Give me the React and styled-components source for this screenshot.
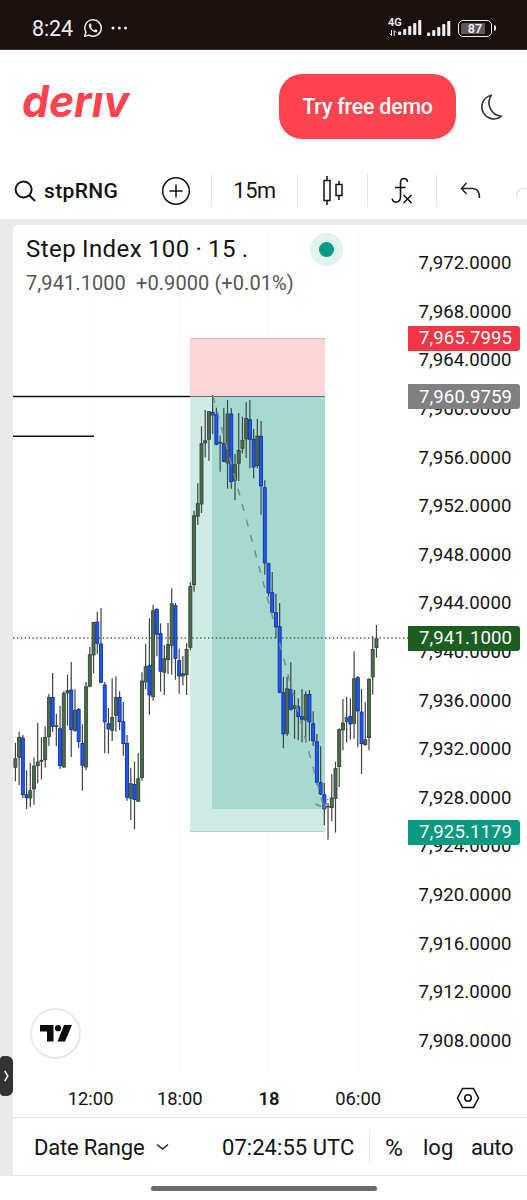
import React from "react";
import styled, { createGlobalStyle } from "styled-components";

const GlobalStyle = createGlobalStyle`
  * {
    box-sizing: border-box;
  }
  body {
    margin: 0;
    background: #fff;
    font-family: Roboto, "Liberation Sans", sans-serif;
    color: #131313;
  }
`;

const Screen = styled.div`
  width: 527px;
  height: 1200px;
  display: flex;
  flex-direction: column;
  overflow: hidden;
  background: #fff;
`;

const StatusBar = styled.div`
  height: 50px;
  flex: none;
  display: flex;
  align-items: center;
  justify-content: space-between;
  padding: 7px 31px 0 32px;
  background: #1a100e;
  border-bottom: 1px solid #3b3331;
  color: #f1eeee;
  .left,
  .right {
    display: flex;
    align-items: center;
  }
  .time {
    width: 51px;
    font-size: 21.5px;
    letter-spacing: -0.1px;
  }
`;

const Header = styled.header`
  height: 112px;
  flex: none;
  display: flex;
  align-items: center;
  padding: 0 22px 0 23px;
  .logo {
    flex: 1;
    display: block;
    overflow: visible;
  }
  .moon {
    position: relative;
    top: 1px;
    left: -1px;
  }
`;

const DemoButton = styled.button`
  width: 177px;
  height: 65px;
  margin-right: 22px;
  border: 0;
  border-radius: 23px;
  background: #ff444f;
  color: #fff;
  font-family: inherit;
  font-size: 21.3px;
  letter-spacing: -0.17px;
  font-weight: 500;
  padding: 1px 0 0;
  white-space: nowrap;
`;

const Toolbar = styled.div`
  height: 57px;
  flex: none;
  display: flex;
  align-items: center;
  overflow: hidden;
  svg {
    flex: none;
  }
`;

const Tool = styled.div`
  width: ${(p) => p.$width}px;
  height: 33px;
  flex: none;
  display: flex;
  align-items: center;
  justify-content: ${(p) => (p.$start ? "flex-start" : "center")};
  padding-left: ${(p) => (p.$start ? 14 : 0)}px;
  border-right: ${(p) => (p.$line ? "1px solid #e4e4e4" : "0")};
  font-size: 21.8px;
  letter-spacing: -0.4px;
  b {
    margin-left: 8px;
    font-size: 21px;
    font-weight: 500;
    letter-spacing: 0.35px;
  }
`;

const Body = styled.div`
  height: 957px;
  flex: none;
  display: flex;
  padding-top: 6px;
  background: #e9e9e9;
  border-bottom: 1px solid #e6e6e6;
`;

const Rail = styled.div`
  width: 13px;
  flex: none;
  padding-top: 831px;
`;

const RailHandle = styled.div`
  width: 13px;
  height: 40px;
  display: flex;
  align-items: center;
  justify-content: center;
  border-radius: 4px 6px 6px 4px;
  background: #333;
`;

const Panel = styled.div`
  flex: 1;
  display: flex;
  flex-direction: column;
  background: #fff;
  border-top-left-radius: 5px;
`;

const ChartArea = styled.div`
  height: 847px;
  display: flex;
  position: relative;
`;

const Legend = styled.div`
  position: absolute;
  left: 13px;
  top: 8px;
  white-space: nowrap;
  .title {
    display: flex;
    align-items: center;
    height: 32px;
    font-size: 24px;
    letter-spacing: 0.45px;
    word-spacing: -0.6px;
  }
  .values {
    margin-top: 6px;
    font-size: 20px;
    line-height: 24px;
    letter-spacing: 0.08px;
    color: #555;
    white-space: pre;
  }
`;

const LiveDot = styled.span`
  position: absolute;
  left: 284px;
  top: 0;
  width: 33px;
  height: 33px;
  border-radius: 50%;
  border: 9px solid #e0f1ee;
  background: #089981;
`;

const TvBadge = styled.div`
  position: absolute;
  left: 17px;
  top: 783px;
  width: 51px;
  height: 51px;
  display: flex;
  align-items: center;
  justify-content: center;
  border: 2px solid #e9e9e9;
  border-radius: 50%;
  background: #fff;
`;

const PriceScale = styled.div`
  flex: 1;
  padding-top: 13.5px;
  position: relative;
`;

const Price = styled.div`
  height: 48.6px;
  padding: 1px 0 0 10.5px;
  display: flex;
  align-items: center;
  font-size: 18.6px;
  letter-spacing: 0.08px;
`;

const PriceTag = styled.div`
  position: absolute;
  left: 0;
  top: ${(p) => p.$top}px;
  width: 112px;
  height: 25px;
  padding: 0 0 0 11px;
  display: flex;
  align-items: center;
  border-radius: 0 3px 3px 0;
  background: ${(p) => p.$color};
  color: #fff;
  font-size: 18.6px;
  letter-spacing: 0.1px;
`;

const TimeScale = styled.div`
  height: 46px;
  display: flex;
  align-items: center;
  padding: 8px 0 0 33px;
  border-bottom: 1px solid #e6e6e6;
  font-size: 18.4px;
  span {
    width: 89.2px;
    text-align: center;
  }
  .bold {
    font-weight: 600;
  }
  svg {
    margin: -2px 0 0 53px;
  }
`;

const BottomBar = styled.div`
  height: 57px;
  display: flex;
  align-items: center;
  padding: 1px 0 0 21px;
  font-size: 22px;
  white-space: nowrap;
  .range {
    width: 188px;
    display: flex;
    align-items: center;
    letter-spacing: -0.2px;
    svg {
      margin-left: 12px;
    }
  }
  .clock {
    width: 148px;
    height: 33px;
    line-height: 34px;
    letter-spacing: 0.05px;
    border-right: 1px solid #e4e4e4;
  }
  .percent {
    width: 53px;
    padding-left: 15px;
    font-size: 24.5px;
  }
  .log {
    width: 48px;
  }
  .auto {
    letter-spacing: -0.4px;
  }
`;

const HomeBar = styled.div`
  width: 226px;
  height: 5px;
  margin: 10px 0 0 151px;
  border-radius: 3px;
  background: #6b6b6b;
`;

// every group: distance of its origin from the chart top, then
// [high, body top, body bottom, low, falling] in thirds of a pixel
const GROUPS = [
  {
    base: 355,
    bars: [
      [488, 535, 563, 604], [455, 471, 533, 615], [465, 473, 645, 654, 1], [571, 643, 654, 687, 1],
      [549, 631, 655, 681], [532, 557, 628, 674], [429, 545, 558, 610], [472, 540, 545, 598],
      [439, 471, 540, 563], [341, 351, 471, 498], [279, 351, 440, 455, 1], [401, 436, 440, 499],
      [378, 445, 558, 567, 1], [334, 339, 562, 564], [284, 331, 340, 437], [246, 329, 450, 531, 1],
      [328, 390, 452, 456], [384, 387, 486, 504, 1], [433, 489, 557, 632, 1], [306, 319, 562, 571],
      [201, 223, 320, 322], [126, 126, 226, 279], [95, 125, 191, 223, 1], [84, 191, 308, 309, 1],
      [306, 314, 427, 520, 1], [384, 430, 448, 521, 1], [295, 411, 452, 483], [289, 351, 407, 455],
      [334, 351, 426, 450, 1], [366, 424, 492, 527, 1], [465, 489, 653, 662, 1], [564, 610, 656, 720],
      [545, 612, 660, 748, 1], [519, 595, 665, 665],
    ],
  },
  {
    base: 315,
    bars: [
      [397, 422, 714, 722], [312, 379, 427, 447], [235, 376, 466, 524, 1], [194, 211, 471, 482],
      [205, 207, 284, 349, 1], [250, 280, 395, 455, 1], [315, 355, 398, 465], [249, 313, 360, 402],
      [145, 190, 317, 404], [189, 196, 356, 419, 1], [326, 361, 409, 461, 1], [348, 400, 409, 436],
      [310, 327, 405, 465], [127, 138, 323, 331],
    ],
  },
  {
    base: 155,
    bars: [
      [392, 406, 615, 635], [310, 370, 410, 435], [139, 190, 373, 399], [90, 181, 190, 232],
      [94, 94, 179, 242], [45, 96, 106, 162, 1], [83, 103, 194, 196, 1], [167, 186, 190, 275],
      [84, 190, 245, 247, 1], [60, 101, 250, 326], [84, 101, 306, 326, 1], [222, 253, 302, 361],
      [99, 210, 251, 303], [110, 180, 206, 220], [67, 114, 178, 234], [60, 118, 179, 265, 1],
      [147, 178, 262, 295, 1], [117, 167, 258, 265], [123, 168, 319, 404, 1], [301, 322, 550, 584, 1],
      [548, 550, 640, 650, 1],
    ],
  },
  {
    base: 335,
    bars: [
      [36, 97, 158, 160, 1], [101, 157, 202, 235, 1], [129, 199, 398, 400, 1], [350, 397, 523, 565, 1],
      [350, 385, 521, 528], [307, 388, 449, 452, 1], [390, 436, 446, 536], [415, 439, 471, 541, 1],
      [388, 469, 479, 547, 1], [394, 403, 481, 545], [390, 402, 487, 543, 1], [454, 490, 544, 558, 1],
      [522, 544, 668, 674, 1], [559, 667, 703, 705, 1], [669, 703, 748, 796, 1], [729, 738, 742, 839],
      [642, 713, 744, 784], [605, 624, 716, 818], [505, 508, 621, 681], [417, 488, 511, 571],
      [410, 472, 486, 547], [415, 468, 493, 539, 1], [274, 355, 491, 536], [348, 352, 454, 562, 1],
      [387, 455, 552, 642, 1], [427, 538, 555, 557], [355, 357, 534, 571], [228, 267, 352, 404],
      [195, 235, 264, 293],
    ],
  },
];

const candles = GROUPS.flatMap(({ base, bars }) =>
  bars.map(([high, top, bottom, low, falling]) => ({
    high: base + high / 3,
    top: base + top / 3,
    bottom: base + bottom / 3,
    low: base + low / 3,
    falling,
  }))
);

const prices = Array.from({ length: 17 }, (_, i) => `7,${972 - i * 4}.0000`);

const tags = [
  { text: "7,965.7995", top: 101, color: "#f23645" },
  { text: "7,960.9759", top: 159.5, color: "#808080" },
  { text: "7,941.1000", top: 401, color: "#1b5e20" },
  { text: "7,925.1179", top: 595, color: "#089981" },
];

function Candle({ index, high, top, bottom, low, falling }) {
  const x = 2.4 + index * 3.722;
  return (
    <g>
      <line x1={x} x2={x} y1={high} y2={low} stroke="#3f4440" strokeWidth="1.2" />
      <rect
        x={x - 1.5}
        y={top + 0.4}
        width="3"
        height={Math.max(bottom - top - 0.8, 0.6)}
        fill={falling ? "#2157f3" : "#4c6b4d"}
        stroke={falling ? "#0c2fa8" : "#35473a"}
        strokeWidth="0.9"
      />
    </g>
  );
}

function Chart() {
  return (
    <svg width="395" height="847" viewBox="0 0 395 847">
      {[77.5, 166.5, 256, 345.5].map((x) => (
        <line key={x} x1={x} x2={x} y1="0" y2="847" stroke="#f9f9f9" />
      ))}
      <rect x="177" y="113" width="135" height="58.5" fill="#fbd5d8" />
      <line x1="177" x2="312" y1="113.5" y2="113.5" stroke="#f3b3b8" />
      <rect x="177" y="171.5" width="135" height="435.5" fill="#cfebe5" />
      <rect x="199" y="171.5" width="113" height="412.5" fill="#a6dad1" />
      <line x1="177" x2="312" y1="606.5" y2="606.5" stroke="#a8d9d0" />
      <line x1="0" x2="177" y1="171.5" y2="171.5" stroke="#111" strokeWidth="1.4" />
      <line x1="177" x2="312" y1="171.5" y2="171.5" stroke="#66706e" strokeWidth="1.2" />
      <line x1="0" x2="81" y1="211.3" y2="211.3" stroke="#111" strokeWidth="1.6" />
      <line x1="0" x2="395" y1="413" y2="413" stroke="#39703c" strokeWidth="1.3" strokeDasharray="1.4 2.5" />
      {candles.map((candle, i) => (
        <Candle key={i} index={i} {...candle} />
      ))}
      <g fill="none" stroke="#7f8b89" strokeWidth="1.6" strokeDasharray="7 9">
        <path d="M200 171L311 583" />
        <path d="M302.500 579L311 583L315 574" strokeDasharray="6 3" />
      </g>
    </svg>
  );
}

function Signal() {
  return (
    <svg width="24" height="17" viewBox="0 0 24 17" fill="#f1eeee">
      <rect x="0" y="12.500" width="3.2" height="3.500" rx="1" />
      <rect x="5.2" y="10" width="3.1" height="6" rx="1" />
      <rect x="10.2" y="7" width="3.1" height="9" rx="1" />
      <rect x="15.200" y="4" width="3.1" height="12" rx="1" />
      <rect x="20.200" y="1" width="3.1" height="15" rx="1" />
    </svg>
  );
}

const Network = styled.div`
  width: 36px;
  height: 18px;
  display: flex;
  position: relative;
  margin-right: 2px;
  padding-left: 9px;
  .label {
    position: absolute;
    left: -1px;
    top: -1px;
    font-size: 11px;
    line-height: 10px;
    font-weight: 600;
  }
  .arrows {
    position: absolute;
    left: 0;
    top: 11px;
  }
`;

const Battery = styled.div`
  width: 34px;
  height: 17px;
  margin: 0 4px 0 7px;
  border: 1.6px solid #f1eeee;
  border-radius: 5px;
  display: flex;
  align-items: center;
  justify-content: center;
  position: relative;
  font-size: 12.5px;
  font-weight: 600;
  background: linear-gradient(90deg, #5d5655 82%, #1a100e 82%) content-box;
  padding: 1.5px;
  &::after {
    content: "";
    position: absolute;
    right: -5px;
    top: 4px;
    width: 2px;
    height: 6px;
    border-radius: 0 2px 2px 0;
    background: #f1eeee;
  }
`;

function Status() {
  return (
    <StatusBar>
      <div className="left">
        <span className="time">8:24</span>
        <svg width="20" height="20" viewBox="0 0 20 20" fill="none" stroke="#f1eeee">
          <path d="M1.700 18.300L2.900 14A8.200 8.200 0 1 1 6 17.100Z" strokeWidth="1.5" strokeLinejoin="round" />
          <path
            d="M6.800 5.400C5.200 6.400 5.700 9.200 8 11.700C10.300 14.200 13.300 15 14.400 13.300L14.500 12.300L12.400 11.200L11.400 12.200C9.800 11.700 8.600 10.500 7.900 9L8.700 8L7.800 5.500Z"
            fill="#f1eeee"
            stroke="none"
          />
        </svg>
        <svg width="28" height="6" viewBox="0 0 28 6" fill="#f1eeee">
          <circle cx="10" cy="3" r="1.500" />
          <circle cx="16.300" cy="3" r="1.500" />
          <circle cx="22.500" cy="3" r="1.500" />
        </svg>
      </div>
      <div className="right">
        <Network>
          <span className="label">4G</span>
          <svg className="arrows" width="8" height="6" viewBox="0 0 8 6" fill="none" stroke="#f1eeee">
            <path d="M2.500 0V5.500L0.500 3.500M5.200 6V0.500L7.200 2.500" />
          </svg>
          <Signal />
        </Network>
        <Signal />
        <Battery>87</Battery>
      </div>
    </StatusBar>
  );
}

function App() {
  return (
    <>
      <GlobalStyle />
      <Screen>
        <Status />
        <Header>
          <svg className="logo" height="64" viewBox="0 0 256 64" preserveAspectRatio="xMinYMid meet">
            <text
              x="-1"
              y="43"
              textLength="107"
              lengthAdjust="spacingAndGlyphs"
              fontFamily="Inter, sans-serif"
              fontSize="44"
              fontWeight="750"
              fontStyle="italic"
              fill="#ff444f"
            >
              derıv
            </text>
          </svg>
          <DemoButton>Try free demo</DemoButton>
          <svg className="moon" width="27" height="28" viewBox="0 0 27 28" fill="none" stroke="#333" strokeWidth="1.600">
            <path d="M14.300 2.200A12 12 0 1 0 24.500 23.200A13.500 13.500 0 0 1 14.300 2.200Z" strokeLinejoin="round" />
          </svg>
        </Header>
        <Toolbar>
          <Tool $width={141} $start>
            <svg width="22" height="22" viewBox="0 0 22 22" fill="none" stroke="#131313" strokeWidth="2">
              <circle cx="9.600" cy="9.500" r="8" />
              <path d="M15.300 15.200L21 21" />
            </svg>
            <b>stpRNG</b>
          </Tool>
          <Tool $width={71} $line>
            <svg width="30" height="30" viewBox="0 0 30 30" fill="none" stroke="#131313" strokeWidth="1.500">
              <circle cx="15" cy="15" r="13.300" />
              <path d="M15 8.500V21.500M8.500 15H21.500" />
            </svg>
          </Tool>
          <Tool $width={86} $line>15m</Tool>
          <Tool $width={70} $line>
            <svg width="22" height="31" viewBox="0 0 22 31" fill="none" stroke="#131313" strokeWidth="1.500">
              <path d="M2 5.500H8V25.500H2ZM5 1V5.500M5 25.500V30M14 9.500H20V20.500H14ZM17 6V9.500M17 20.500V25" />
            </svg>
          </Tool>
          <Tool $width={69} $line>
            <svg width="22" height="28" viewBox="0 0 22 28" fill="none" stroke="#131313" strokeWidth="1.600">
              <path d="M16.500 5C16 0.500 9.500 0 9.500 6V20C9.300 26.500 1.500 26.500 1.200 21.500M4 10.500H14.500M12.500 18L20.500 26M20.500 18L12.500 26" />
            </svg>
          </Tool>
          <Tool $width={66}>
            <svg width="21" height="17" viewBox="0 0 21 17" fill="none" stroke="#222" strokeWidth="1.500">
              <path d="M6.500 1L1.500 6.500L6.500 12M1.500 6.500H12.500C17 6.500 19.500 9.500 19.500 16" />
            </svg>
          </Tool>
          <Tool $width={44}>
            <svg width="21" height="17" viewBox="0 0 21 17" fill="none" stroke="#e6e6e6" strokeWidth="1.500">
              <path d="M14.500 1L19.500 6.500L14.500 12M19.500 6.500H8.500C4 6.500 1.500 9.500 1.500 16" />
            </svg>
          </Tool>
        </Toolbar>
        <Body>
          <Rail>
            <RailHandle>
              <svg width="5" height="12" viewBox="0 0 5 12" fill="none" stroke="#fff" strokeWidth="1.500">
                <path d="M0.800 1L3.800 6L0.800 11" />
              </svg>
            </RailHandle>
          </Rail>
          <Panel>
            <ChartArea>
              <Chart />
              <Legend>
                <div className="title">Step Index 100 · 15 .</div>
                <div className="values">7,941.1000  +0.9000 (+0.01%)</div>
                <LiveDot />
              </Legend>
              <TvBadge>
                <svg width="32" height="17" viewBox="0 0 32 17" fill="#0c0c0c">
                  <path d="M0 0H13.500V16.500H7V6.500H0ZM24 0H32L25 16.500H17.500Z" />
                  <circle cx="18" cy="3.200" r="3.100" />
                </svg>
              </TvBadge>
              <PriceScale>
                {prices.map((price) => (
                  <Price key={price}>{price}</Price>
                ))}
                {tags.map(({ text, top, color }) => (
                  <PriceTag key={text} $top={top - 0.5} $color={color}>
                    {text}
                  </PriceTag>
                ))}
              </PriceScale>
            </ChartArea>
            <TimeScale>
              <span>12:00</span>
              <span>18:00</span>
              <span className="bold">18</span>
              <span>06:00</span>
              <svg width="24" height="22" viewBox="0 0 24 22" fill="none" stroke="#131313" strokeWidth="1.600">
                <path d="M6.500 1.500H17.500L22.500 11L17.500 20.500H6.500L1.500 11Z" />
                <circle cx="12" cy="11" r="3.200" />
              </svg>
            </TimeScale>
            <BottomBar>
              <span className="range">
                Date Range
                <svg width="13" height="8" viewBox="0 0 13 8" fill="none" stroke="#222" strokeWidth="1.500">
                  <path d="M1 1.500L6.500 6L12 1.500" />
                </svg>
              </span>
              <span className="clock">07:24:55 UTC</span>
              <span className="percent">%</span>
              <span className="log">log</span>
              <span className="auto">auto</span>
            </BottomBar>
          </Panel>
        </Body>
        <HomeBar />
      </Screen>
    </>
  );
}

export default App;
